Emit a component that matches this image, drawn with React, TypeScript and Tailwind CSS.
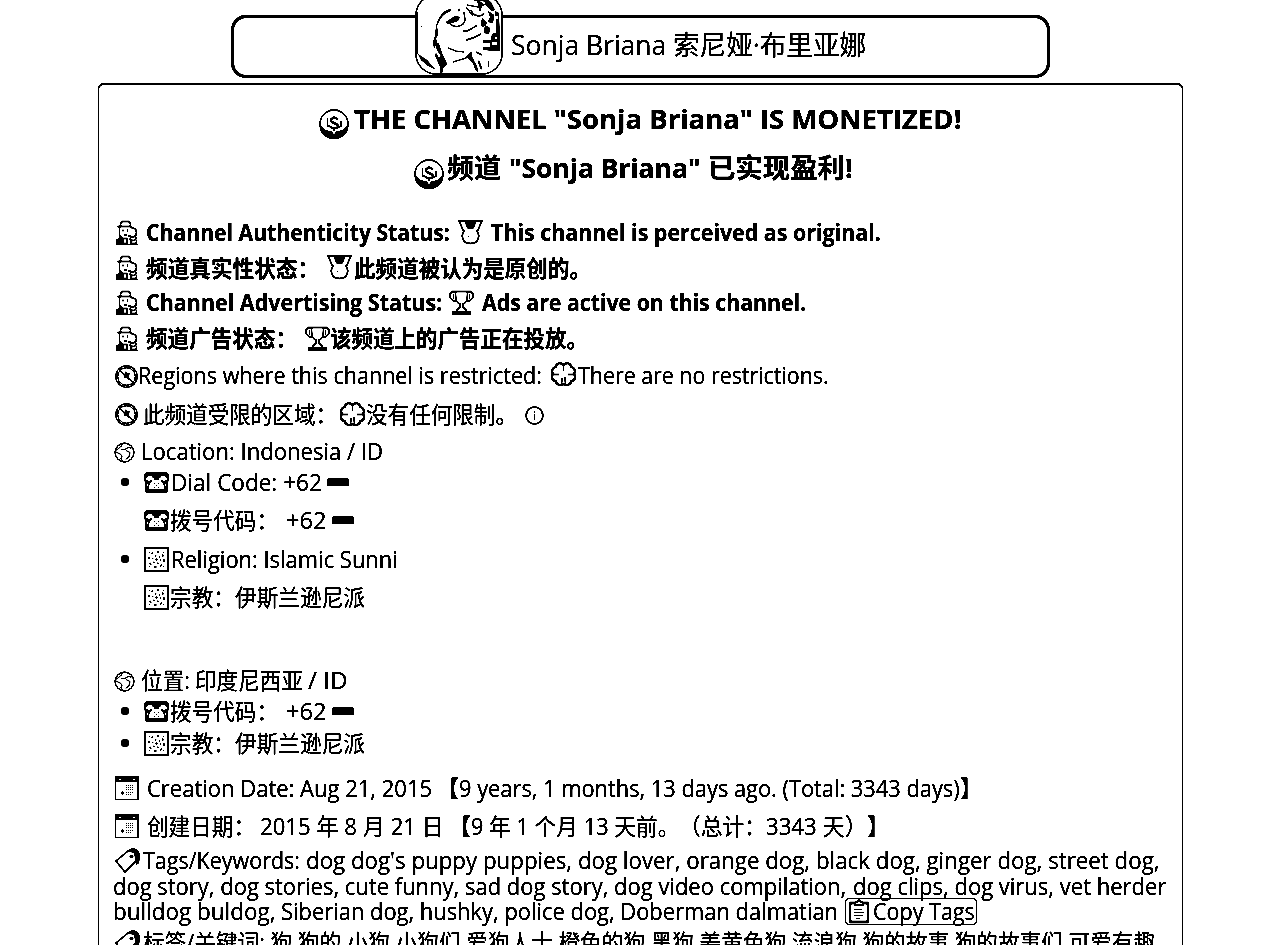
import { useLayoutEffect, useRef } from "react";
import type { ReactNode } from "react";

/* Text stretched horizontally so that it fills the width of its box. */
function Fit({ className = "", children }: { className?: string; children: ReactNode }) {
  const outer = useRef<HTMLSpanElement>(null);
  const inner = useRef<HTMLSpanElement>(null);
  useLayoutEffect(() => {
    const o = outer.current;
    const i = inner.current;
    if (!o || !i) return;
    const natural = i.offsetWidth;
    if (natural > 0) i.style.transform = `scaleX(${o.offsetWidth / natural})`;
  }, []);
  return (
    <span ref={outer} className={`block shrink-0 whitespace-pre ${className}`}>
      <span ref={inner} className="block w-max origin-left">
        {children}
      </span>
    </span>
  );
}

function Row({ className = "", children }: { className?: string; children: ReactNode }) {
  return <div className={`flex items-center ${className}`}>{children}</div>;
}

function Bullet() {
  return <span className="ml-[8px] block size-2 shrink-0 rounded-full bg-black" />;
}

const line = { fill: "none", stroke: "currentColor", strokeWidth: 1.4, strokeLinejoin: "round", strokeLinecap: "round" } as const;

function Coin({ className = "" }: { className?: string }) {
  return (
    <svg viewBox="0 0 30 30" className={`size-[30px] shrink-0 ${className}`}>
      <circle cx="15" cy="15" r="14" fill="white" stroke="black" strokeWidth="1.3" />
      <path d="M1 14v4a14 12 0 0 0 28 0v-4c-1 4-4 7-9 8l-5 1-5-1c-5-1-8-4-9-8Z" fill="black" />
      <path d="M19 10.500c-2-2.500-7-2-7 1s7 2.500 7 5.500-6 3-8 .5M15 7v3M15 18v5" fill="none" stroke="black" strokeWidth="2" />
      <path d="M8.500 9.500v7M8 17h3M22 12v6M21 18h-2" fill="none" stroke="black" strokeWidth="1" />
      <path d="M13 22h4l-2 4Z" fill="white" />
    </svg>
  );
}

function Detective({ className = "" }: { className?: string }) {
  return (
    <svg viewBox="0 0 22 25" className={`h-[25px] w-[22px] shrink-0 ${className}`}>
      <path d="M0 20l4-3 2 1v6h16v1H0Z" fill="black" />
      <g {...line}>
        <path d="M2 6.500h13M4.500 6V3.500L6 1.500h7l1.500 2V6" />
        <path d="M3.500 7v8.500L6 17.500M15 7.500c3 0 5.500 2 5.500 5s-2 5-5 4.500l-3-1.500" />
        <path d="M7 18.500h4v5H7ZM14 19c2 3 7 1 6-1.500M14.500 20v3.500h6V21" />
      </g>
      <path d="M6.500 9.500h1v2h-1ZM11 9.500h1v2h-1ZM8 14.500h3v1H8Z" fill="black" />
    </svg>
  );
}

function Medal({ className = "" }: { className?: string }) {
  return (
    <svg viewBox="0 0 25 25" className={`size-[25px] shrink-0 ${className}`}>
      <path d="M1 1h6l3 7h5l3-7h6l-5 11H6Z" fill="white" stroke="black" strokeWidth="1.400" strokeLinejoin="round" />
      <path d="M7 .5h11L14.500 8l-2 1-2-1Z" fill="black" />
      <path d="M7 10.500c-4.500 4-3.500 13.500 5.500 13.500s10-9.500 5.500-13.500l-3-2h-5Z" fill="white" />
      <path d="M7 10.500c-4.500 4-3.500 13 5.500 13s10-9 5.500-13" fill="none" stroke="black" strokeWidth="1.500" />
      <path d="M10 16h1v1h-1Z" fill="black" />
    </svg>
  );
}

function Trophy({ className = "" }: { className?: string }) {
  return (
    <svg viewBox="0 0 25 25" className={`size-[25px] shrink-0 ${className}`}>
      <path d="M3 1.500h19M6.500 2c0 7 0 10 4.500 12v3l-3 3M18.500 2c0 7 0 10-4.500 12v3l3 3M4.500 2C0 2 0 6 2 8.500s4 3 5 2.500M20.500 2c4.500 0 4.500 4 2.500 6.500s-4 3-5 2.500" {...line} />
      <path d="M3 21h19v4H3ZM4 4.500h1V9H4ZM20 4.500h1V9h-1Z" fill="black" />
    </svg>
  );
}

function Blocked({ className = "" }: { className?: string }) {
  return (
    <svg viewBox="0 0 24 24" className={`size-[23px] shrink-0 ${className}`}>
      <circle cx="12" cy="12" r="10.200" fill="none" stroke="black" strokeWidth="3" />
      <circle cx="12" cy="12" r="10" fill="none" stroke="white" strokeWidth="1.300" strokeDasharray="2.500 2.700" />
      <path d="M5 5.500l14 13" stroke="black" strokeWidth="1.300" />
      <path d="M11 6.500l1.500 2 3.500-.5-2 3.500V15l-2-2-3 1 .5-2.500L8 9.500h2.500Z" fill="black" />
    </svg>
  );
}

function Clover({ className = "" }: { className?: string }) {
  return (
    <svg viewBox="0 0 25 25" className={`size-[25px] shrink-0 ${className}`}>
      <path
        d="M12.500 3C10 0 5 1 5 5c-3 0-5 4-3 7-2 3-1 7 3 7 0 4 5 5 7.500 3 2.500 2 7.500 1 7.500-3 4 0 5-4 3-7 2-3 0-7-3-7 0-4-5-5-7.500-2Z"
        fill="none"
        stroke="black"
        strokeWidth="2"
      />
      <path d="M12.500 3v6M3 12.500h5M22 12.500h-5M11 16l-.5 6M14 15l.5 7" fill="none" stroke="black" strokeWidth="1.300" />
    </svg>
  );
}

function Globe({ className = "" }: { className?: string }) {
  return (
    <svg viewBox="0 0 21 21" className={`size-[21px] shrink-0 ${className}`}>
      <circle cx="10.500" cy="10.500" r="9.400" fill="none" stroke="black" strokeWidth="1.200" />
      <path d="M9 1.500L6.500 5 2.500 8M2 10l5 2.500 1 2.500-1 1.500 2 3M7 7.500h4l3-2 3.500.5M12 8.500l4 2-1 4-3 3" fill="none" stroke="black" strokeWidth="1" />
    </svg>
  );
}

function Phone({ className = "" }: { className?: string }) {
  return (
    <svg viewBox="0 0 25 21" className={`h-[21px] w-[25px] shrink-0 ${className}`}>
      <path d="M3 0h19l3 3v5l-1 2v9l-2 2H3l-2-2v-9L0 8V3Z" fill="black" />
      <path d="M1.500 7.500L4 4h4l1 3.500-3 1-1 1ZM23.500 7.500L21 4h-4l-1 3.500 3 1 1 1Z" fill="white" />
      <path d="M8 5.500h2.500V8h4V5.500H17V9l2.500 3 1 4.500-2 1h-12l-2-1 1-4.500L8 9Z" fill="white" />
      <path d="M2.500 11.500l2 0-1.500 5h-.5ZM22.500 11.500l-2 0 1.500 5h.5Z" fill="white" />
      <path d="M10 11h1v1h-1ZM14 11h1v1h-1ZM12 13h1v1h-1ZM10 15h1v1h-1ZM14 15h1v1h-1Z" fill="black" />
    </svg>
  );
}

function Flag({ className = "" }: { className?: string }) {
  return <span className={`block h-2 w-[22px] shrink-0 rounded-t-[3px] rounded-b-[1px] bg-black ${className}`} />;
}

function Tile({ className = "" }: { className?: string }) {
  return (
    <svg viewBox="0 0 25 25" className={`size-[25px] shrink-0 ${className}`}>
      <path d="M1 1h23v23H1Z" fill="white" stroke="black" strokeWidth="2" />
      <circle cx="12.500" cy="12.500" r="7.500" fill="none" stroke="black" strokeWidth="1.400" strokeDasharray="2.300 3.600" />
      <circle cx="12.500" cy="12.500" r="4" fill="none" stroke="black" strokeWidth="1.300" strokeDasharray="1.300 2.900" />
      <path d="M12 11h1v3h-1ZM11 12h3v1h-3ZM5 5h1v1H5ZM19 5h1v1h-1ZM5 19h1v1H5ZM19 19h1v1h-1Z" fill="black" />
    </svg>
  );
}

function Calendar({ className = "" }: { className?: string }) {
  return (
    <svg viewBox="0 0 24 24" className={`size-6 shrink-0 ${className}`} shapeRendering="crispEdges">
      <path d="M0 0h24v24H0Z" fill="black" />
      <path d="M1 6h21v17H1ZM4 3h2v1H4ZM18 3h2v1h-2Z" fill="white" />
      <path d="M7 15h1v1h1v2H8v1H7v-1H6v-2h1Z" fill="black" />
      <path d="M11 9.500h7M11 11.500h7M11 13.500h7M11 16.500h7M11 18.500h5" stroke="black" strokeWidth="1" strokeDasharray="1 1" />
    </svg>
  );
}

function Tag({ className = "" }: { className?: string }) {
  return (
    <svg viewBox="0 0 25 25" className={`size-[25px] shrink-0 ${className}`}>
      <path d="M12 3l5-3c4 0 7 3 8 7l-1 8-3 2V9l-3-5Z" fill="black" />
      <path d="M1 13L13 3l7 1 1 9-11 11Z" fill="white" stroke="black" strokeWidth="1.500" strokeLinejoin="round" />
      <circle cx="16.500" cy="8.500" r="1.800" fill="black" />
    </svg>
  );
}

function Clipboard({ className = "" }: { className?: string }) {
  return (
    <svg viewBox="0 0 22 25" className={`h-[25px] w-[22px] shrink-0 ${className}`}>
      <path d="M2 4h18v19H2Z" fill="white" stroke="black" strokeWidth="2.400" strokeLinejoin="round" />
      <path d="M7 4l2-1 2-2 2 2 2 1v2H7Z" fill="white" stroke="black" strokeWidth="1.600" />
      <path d="M6 10.500h8M6 13.500h10M6 16.500h9M8 19.500h4" stroke="black" strokeWidth="1" />
    </svg>
  );
}

function Info({ className = "" }: { className?: string }) {
  return (
    <svg viewBox="0 0 19 19" className={`size-[19px] shrink-0 ${className}`}>
      <circle cx="9.500" cy="9.500" r="8.400" fill="none" stroke="black" strokeWidth="1.500" />
      <path d="M9 5h1v2H9ZM9 8h1v6H9Z" fill="black" />
    </svg>
  );
}

function Avatar({ className = "" }: { className?: string }) {
  return (
    <svg viewBox="0 0 88 82" className={`h-[82px] w-[88px] shrink-0 ${className}`}>
      <rect x="1" y="1" width="86" height="79" rx="20" fill="white" stroke="black" strokeWidth="1.300" />
      <path d="M1.500 18v42" stroke="black" strokeWidth="2.500" />
      <path d="M36 15c-8 1-13 8-15 18l-1 9-2 6 1 6 3-4-1-6 2-3-1-9c3-8 7-13 14-15Z" fill="black" />
      <path d="M20 47l4 3 3 9 5 11-4 4-1 6-2-2v-5l-5-12 1-2 3 5 2-2-4-6ZM3 60l9 6 8 9-7-3-7-6Z" fill="black" />
      <path d="M31 28l9-6 5 1-2 4-6 2-4 1Z" fill="black" />
      <path d="M35 30c6 5 14 2 15-4l-1-8M43 17l2-2M51 13l7 9M52 11l11 2 8-3M56 16c2 6 10 8 13 3M59 6l12 1" fill="none" stroke="black" strokeWidth="1.200" />
      <path d="M48 37.500l5-1 9-5M51 46l7-2 8-4" fill="none" stroke="black" strokeWidth="1.400" />
      <path d="M33 54l8 3 8 1M38 68l13-4 6-6M61 58l6 3M56 4l18 2" fill="none" stroke="black" strokeWidth="1.100" />
      <path d="M62 6l6 3-3 9ZM70 5l6 3 4 8-3 1-6-6ZM73 17l6 4-1 8-5-1 2-5ZM67 24l5 5-4 4-2-2ZM80 17l4 2 1 38-17-1v-3h7v-4h-7v-3h8l1-6 4-1V24ZM70 31l5 3-1 6-5-1Z" fill="black" />
      <path d="M76 33h3v4h-3ZM77 48h5v3h-5ZM81 22h2v3h-2ZM80 43h2v2h-2Z" fill="white" />
      <path d="M52 63l4-4 1 4 2 3-1 3-4-4ZM59 67l3 5 1 6-3-3-2-6ZM64 66l3 8-1 2-3-8ZM73 67h1v6h-1Z" fill="black" />
      <path d="M6 32h1v1H6Z" fill="black" />
    </svg>
  );
}

const sans = "font-['Open_Sans','Noto_Sans_CJK_SC',sans-serif]";

export default function App() {
  return (
    <div
      className={`h-[945px] w-[1280px] overflow-hidden bg-white text-[23px] leading-[26px] text-black brightness-[0.7] contrast-[10] ${sans}`}
    >
      <header className="mt-[15px] ml-[231px] flex h-[63px] w-[819px] items-center rounded-[15px] border-[3px] border-black text-[27px] leading-[34px]">
        <Avatar className="-mt-[23px] ml-[181px]" />
        <Fit className="-mt-1 ml-2 w-[155px]">Sonja Briana</Fit>
        <Fit className="-mt-1 ml-[7px] w-[193px]">索尼娅·布里亚娜</Fit>
      </header>

      <main className="mt-[5px] ml-[98px] h-[900px] w-[1085px] rounded-md border border-t-2 border-black pt-[10px] pl-[14px]">
        <Row className="h-12 text-[27px] leading-9 font-bold">
          <Coin className="mt-[10px] ml-[206px]" />
          <Fit className="ml-[5px] w-[608px]">THE CHANNEL "Sonja Briana" IS MONETIZED!</Fit>
        </Row>
        <Row className="h-[49px] text-[27px] leading-9 font-bold">
          <Coin className="mt-3 ml-[301px]" />
          <Fit className="ml-[3px] w-[54px]">频道</Fit>
          <Fit className="ml-[8px] w-[191px]">"Sonja Briana"</Fit>
          <Fit className="ml-[8px] w-[145px]">已实现盈利!</Fit>
        </Row>

        <Row className="mt-[22px] h-9 font-bold">
          <Detective className="ml-[3px]" />
          <Fit className="ml-[8px] w-[304px]">Channel Authenticity Status:</Fit>
          <Medal className="ml-[8px]" />
          <Fit className="ml-[8px] w-[390px]">This channel is perceived as original.</Fit>
        </Row>
        <Row className="h-[35px] font-bold">
          <Detective className="ml-[3px]" />
          <Fit className="ml-[8px] w-[173px]">频道真实性状态：</Fit>
          <Medal className="ml-[8px]" />
          <Fit className="ml-[2px] w-[237px]">此频道被认为是原创的。</Fit>
        </Row>
        <Row className="h-[34px] font-bold">
          <Detective className="ml-[3px]" />
          <Fit className="ml-[8px] w-[296px]">Channel Advertising Status:</Fit>
          <Trophy className="ml-[7px]" />
          <Fit className="ml-[8px] w-[324px]">Ads are active on this channel.</Fit>
        </Row>
        <Row className="h-[38px] font-bold">
          <Detective className="ml-[3px]" />
          <Fit className="ml-[8px] w-[151px]">频道广告状态：</Fit>
          <Trophy className="ml-[8px]" />
          <Fit className="w-[258px]">该频道上的广告正在投放。</Fit>
        </Row>

        <Row className="h-[35px]">
          <Blocked className="mt-1 ml-[2px]" />
          <Fit className="w-[404px]">Regions where this channel is restricted:</Fit>
          <Clover className="ml-[9px]" />
          <Fit className="ml-[2px] w-[251px]">There are no restrictions.</Fit>
        </Row>
        <Row className="h-11">
          <Blocked className="ml-[2px]" />
          <Fit className="ml-[5px] w-[194px]">此频道受限的区域：</Fit>
          <Clover className="ml-[3px]" />
          <Fit className="ml-[1px] w-[151px]">没有任何限制。</Fit>
          <Info className="mt-0.5 ml-[8px]" />
        </Row>

        <Row className="h-[30px]">
          <Globe className="mt-[3px] ml-[1px]" />
          <Fit className="ml-[6px] w-[242px]">Location: Indonesia / ID</Fit>
        </Row>
        <Row className="h-8">
          <Bullet />
          <Phone className="ml-[15px]" />
          <Fit className="ml-[2px] w-[151px]">Dial Code: +62</Fit>
          <Flag className="ml-[5px]" />
        </Row>
        <Row className="h-11">
          <Phone className="ml-[31px]" />
          <Fit className="ml-[1px] w-[108px]">拨号代码：</Fit>
          <Fit className="ml-[8px] w-[40px]">+62</Fit>
          <Flag className="ml-[6px]" />
        </Row>
        <Row className="h-[34px]">
          <Bullet />
          <Tile className="ml-[15px]" />
          <Fit className="ml-[2px] w-[227px]">Religion: Islamic Sunni</Fit>
        </Row>
        <Row className="h-[42px]">
          <Tile className="ml-[31px]" />
          <Fit className="ml-[1px] w-[195px]">宗教：伊斯兰逊尼派</Fit>
        </Row>

        <Row className="mt-11 h-9">
          <Globe className="mt-[3px] ml-[1px]" />
          <Fit className="ml-[6px] w-[49px]">位置:</Fit>
          <Fit className="ml-[5px] w-[108px]">印度尼西亚</Fit>
          <Fit className="ml-[5px] w-[40px]">/ ID</Fit>
        </Row>
        <Row className="h-[26px]">
          <Bullet />
          <Phone className="ml-[15px]" />
          <Fit className="ml-[1px] w-[108px]">拨号代码：</Fit>
          <Fit className="ml-[8px] w-[40px]">+62</Fit>
          <Flag className="ml-[6px]" />
        </Row>
        <Row className="h-[38px]">
          <Bullet />
          <Tile className="ml-[15px]" />
          <Fit className="ml-[1px] w-[195px]">宗教：伊斯兰逊尼派</Fit>
        </Row>

        <Row className="h-[52px]">
          <Calendar className="ml-[2px]" />
          <Fit className="ml-[8px] w-[285px]">Creation Date: Aug 21, 2015</Fit>
          <Fit className="ml-[5px] w-[22px]">【</Fit>
          <Fit className="w-[501px]">9 years, 1 months, 13 days ago. (Total: 3343 days)</Fit>
          <Fit className="w-[22px]">】</Fit>
        </Row>
        <Row className="h-6">
          <Calendar className="ml-[2px]" />
          <Fit className="ml-[8px] w-[108px]">创建日期：</Fit>
          <Fit className="ml-[5px] w-[184px]">2015 年 8 月 21 日</Fit>
          <Fit className="ml-[5px] w-[22px]">【</Fit>
          <Fit className="w-[208px]">9 年 1 个月 13 天前。</Fit>
          <Fit className="w-[87px]">（总计：</Fit>
          <Fit className="w-[79px]">3343 天</Fit>
          <Fit className="w-[22px]">）</Fit>
          <Fit className="w-[22px]">】</Fit>
        </Row>

        <Row className="mt-[9px] h-[26px]">
          <Tag className="ml-[2px]" />
          <Fit className="ml-[3px] w-[157px]">Tags/Keywords:</Fit>
          <Fit className="ml-[6px] w-[854px]">
            dog dog's puppy puppies, dog lover, orange dog, black dog, ginger dog, street dog,
          </Fit>
        </Row>
        <Row className="h-[26px]">
          <Fit className="w-[733px]">dog story, dog stories, cute funny, sad dog story, dog video compilation,</Fit>
          <Fit className="ml-[7px] w-[313px]">dog clips, dog virus, vet herder</Fit>
        </Row>
        <Row className="h-[25px] leading-[25px]">
          <Fit className="w-[163px]">bulldog buldog,</Fit>
          <Fit className="ml-[5px] w-[557px]">Siberian dog, hushky, police dog, Doberman dalmatian</Fit>
          <button className="ml-[7px] flex h-[27px] w-[132px] shrink-0 items-center rounded-[4px] border border-black pl-[2px]">
            <Clipboard />
            <Fit className="ml-[3px] w-[102px] text-left">Copy Tags</Fit>
          </button>
        </Row>
        <Row className="mt-[3px] h-[30px]">
          <Tag className="ml-[2px]" />
          <Fit className="ml-[3px] w-[1012px]">
            标签/关键词: 狗 狗的 小狗 小狗们 爱狗人士 橙色的狗 黑狗 姜黄色狗 流浪狗 狗的故事 狗的故事们 可爱有趣
          </Fit>
        </Row>
      </main>
    </div>
  );
}
